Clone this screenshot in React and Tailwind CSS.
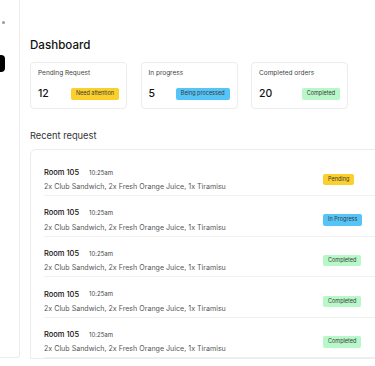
import React from 'react';

const stats = [
  { title: 'Pending Request', value: '12', badge: 'Need attention', color: 'bg-[#fbd02c]' },
  { title: 'In progress', value: '5', badge: 'Being processed', color: 'bg-[#55c5f7]' },
  { title: 'Completed orders', value: '20', badge: 'Completed', color: 'bg-[#b8f7c8]' },
];

const requests = [
  { status: 'Pending', color: 'bg-[#fbd02c]' },
  { status: 'In Progress', color: 'bg-[#55c5f7]' },
  { status: 'Completed', color: 'bg-[#b8f7c8]' },
  { status: 'Completed', color: 'bg-[#b8f7c8]' },
  { status: 'Completed', color: 'bg-[#b8f7c8]' },
];

const Badge = ({ text, color }) => (
  <span className={`${color} rounded-[2px] px-[5px] h-[11.5px] flex items-center text-[5.5px] leading-none text-[#3a3a3a] whitespace-nowrap`}>
    {text}
  </span>
);

const StatCard = ({ title, value, badge, color }) => (
  <div className="w-[97px] shrink-0 border border-[#ececec] rounded-[4px] px-[7px] pt-[6px] pb-[7.5px] bg-white">
    <div className="text-[6.5px] leading-[8px] text-[#444]">{title}</div>
    <div className="mt-[11px] h-[12px] flex items-center justify-between">
      <span className="text-[10.5px] leading-none font-medium text-[#111]">{value}</span>
      <Badge text={badge} color={color} />
    </div>
  </div>
);

const RequestRow = ({ status, color }) => (
  <div className="flex items-center border-b border-[#f0f0f0] pt-[12px] pb-[3.6px]">
    <div className="w-[279px] shrink-0">
      <div className="flex items-center h-[10px]">
        <span className="text-[7.5px] font-medium text-[#111] leading-none">Room 105</span>
        <span className="ml-[10px] text-[6px] text-[#444] leading-none">10:25am</span>
      </div>
      <div className="mt-[4px] h-[10px] flex items-center text-[7.1px] text-[#555] leading-none whitespace-nowrap">
        2x Club Sandwich, 2x Fresh Orange Juice, 1x Tiramisu
      </div>
    </div>
    <Badge text={status} color={color} />
  </div>
);

export default function App() {
  return (
    <div className="flex h-[366px] w-[375px] overflow-hidden bg-white" style={{ fontFamily: 'Inter, "Noto Sans", sans-serif' }}>
      {/* sidebar, mostly collapsed */}
      <div className="w-[20px] h-[358px] shrink-0 border-r border-b border-[#ececec] rounded-br-[3px] flex flex-col pt-[21px]">
        <div className="ml-[2px] w-[2.5px] h-[2.5px] rounded-full bg-[#9a9a9a]" />
        <div className="mt-[31px] w-[5px] h-[17px] rounded-r-[4px] bg-black" />
      </div>

      {/* main */}
      <main className="flex-1 pl-[10px] pt-[37px] min-w-0">
        <h1 className="text-[11.6px] leading-[16px] font-medium text-[#111]">Dashboard</h1>

        <div className="mt-[9px] flex gap-[13.5px]">
          {stats.map((s) => (
            <StatCard key={s.title} {...s} />
          ))}
        </div>

        <h2 className="mt-[21px] text-[9.3px] leading-[12px] text-[#333]">Recent request</h2>

        <div className="mt-[7px] w-[380px] border border-[#ececec] rounded-tl-[6px] pl-[13px] pt-[6px]">
          {requests.map((r, i) => (
            <RequestRow key={i} {...r} />
          ))}
        </div>
      </main>
    </div>
  );
}
